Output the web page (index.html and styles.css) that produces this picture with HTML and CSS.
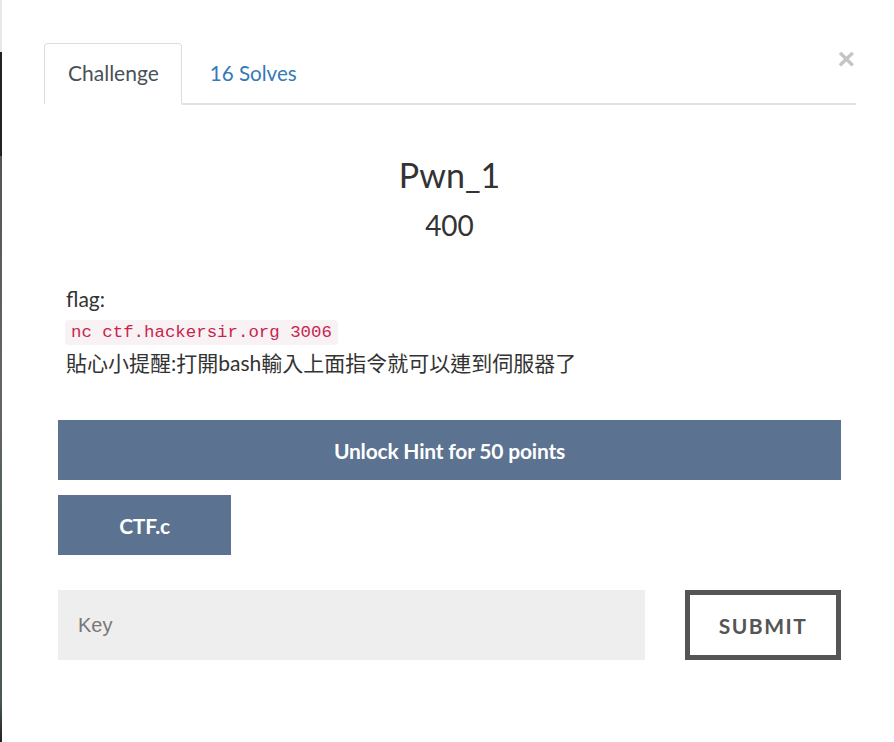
FILE: index.html
```html
<!DOCTYPE html>
<html lang="zh-Hant">
<head>
<meta charset="utf-8">
<title>Pwn_1</title>
<link rel="stylesheet" href="styles.css">
</head>
<body>
<div class="edge"></div>
<div class="modal">
  <button class="close" type="button" aria-label="Close">&times;</button>
  <ul class="tabs">
    <li class="tab active">Challenge</li>
    <li class="tab link">16 Solves</li>
  </ul>
  <div class="content">
    <h2 class="name">Pwn_1</h2>
    <h3 class="value">400</h3>
    <div class="desc">
      <p>flag:<br><code>nc ctf.hackersir.org 3006</code><br>貼心小提醒:打開bash輸入上面指令就可以連到伺服器了</p>
    </div>
    <button class="btn hint" type="button">Unlock Hint for 50 points</button>
    <div class="files">
      <button class="btn file" type="button">CTF.c</button>
    </div>
    <form class="submit-row">
      <input class="key" type="text" placeholder="Key">
      <button class="submit" type="button">SUBMIT</button>
    </form>
  </div>
</div>
</body>
</html>
```

FILE: styles.css
```css
html, body {
  margin: 0;
  padding: 0;
  background: #fff;
}
body {
  font-family: Lato, "Noto Sans CJK TC", sans-serif;
  color: #333;
  width: 894px;
  height: 742px;
  position: relative;
  overflow: hidden;
}
.edge {
  position: absolute;
  left: 0;
  top: 0;
  width: 2px;
  height: 742px;
  background: linear-gradient(to bottom, #e8e8e8 0, #e8e8e8 52px, #222 52px, #222 156px, #555 156px, #666 400px, #4f6157 520px, #4a5a52 700px, #222 742px);
}
.modal {
  position: relative;
  padding: 43px 38px 0 44px;
}
.close {
  position: absolute;
  top: 41px;
  right: 39px;
  border: 0;
  background: none;
  padding: 0;
  font-family: "Liberation Sans", sans-serif;
  font-size: 30px;
  line-height: 36px;
  color: #c4c4c4;
  font-weight: bold;
}
.tabs {
  list-style: none;
  margin: 0;
  padding: 0;
  display: flex;
  border-bottom: 2px solid #e2e2e2;
}
.tab {
  font-size: 21px;
  line-height: 24px;
  padding: 17px 23px 18px;
  margin-bottom: -2px;
  border: 1px solid transparent;
  border-radius: 4px 4px 0 0;
}
.tab.active {
  color: #495057;
  border-color: #ddd #ddd #fff;
  background: #fff;
  border-bottom: 2px solid #fff;
  padding-right: 22px;
}
.tab.link {
  color: #337ab7;
  padding-left: 27px;
  font-size: 20.6px;
}
.content {
  padding: 0 15px 0 14px;
}
.name {
  margin: 50px 0 0;
  text-align: center;
  font-weight: 400;
  font-size: 34px;
  line-height: 40px;
  color: #333;
}
.value {
  margin: 14px 0 0;
  text-align: center;
  font-weight: 400;
  font-size: 28px;
  line-height: 32px;
  color: #333;
}
.desc {
  padding: 0 8px;
  margin-top: 43px;
}
.desc p {
  margin: 0;
  font-size: 21px;
  line-height: 30px;
}
code {
  font-family: "Liberation Mono", monospace;
  font-size: 17.4px;
  color: #c7254e;
  background: #f9f2f4;
  padding: 3px 6px;
  border-radius: 4px;
  margin-left: -1px;
}
.btn {
  display: block;
  border: 0;
  background: #5b7290;
  color: #fff;
  font-family: Lato, sans-serif;
  font-weight: 700;
  font-size: 21px;
  height: 60px;
  letter-spacing: -0.2px;
}
.hint {
  width: 100%;
  margin-top: 42px;
}
.files {
  margin-top: 15px;
}
.file {
  width: 173px;
}
.submit-row {
  display: flex;
  gap: 40px;
  margin-top: 35px;
}
.key {
  flex: 1;
  height: 70px;
  border: 0;
  background: #eee;
  padding: 0 20px;
  font-family: "Liberation Sans", sans-serif;
  font-size: 20px;
  box-sizing: border-box;
  outline: none;
}
.key::placeholder {
  color: #777;
  font-family: "Liberation Sans", sans-serif;
}
.submit {
  width: 156px;
  height: 70px;
  box-sizing: border-box;
  border: 5px solid #555;
  background: #fff;
  color: #555;
  font-family: Lato, sans-serif;
  font-weight: 700;
  font-size: 21px;
  letter-spacing: 1.5px;
}
```
